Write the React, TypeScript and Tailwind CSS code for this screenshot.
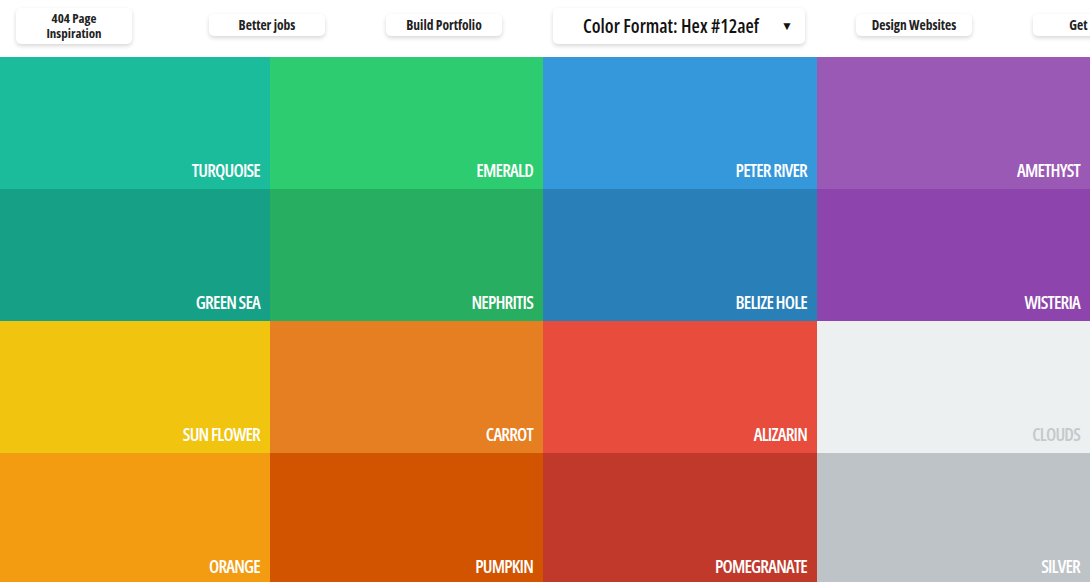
import React from 'react';

interface Swatch {
  name: string;
  bg: string;
  text: string;
}

const swatches: Swatch[] = [
  { name: 'TURQUOISE', bg: 'bg-[#1abc9c]', text: 'text-white' },
  { name: 'EMERALD', bg: 'bg-[#2ecc71]', text: 'text-white' },
  { name: 'PETER RIVER', bg: 'bg-[#3498db]', text: 'text-white' },
  { name: 'AMETHYST', bg: 'bg-[#9b59b6]', text: 'text-white' },
  { name: 'GREEN SEA', bg: 'bg-[#16a085]', text: 'text-white' },
  { name: 'NEPHRITIS', bg: 'bg-[#27ae60]', text: 'text-white' },
  { name: 'BELIZE HOLE', bg: 'bg-[#2980b9]', text: 'text-white' },
  { name: 'WISTERIA', bg: 'bg-[#8e44ad]', text: 'text-white' },
  { name: 'SUN FLOWER', bg: 'bg-[#f1c40f]', text: 'text-white' },
  { name: 'CARROT', bg: 'bg-[#e67e22]', text: 'text-white' },
  { name: 'ALIZARIN', bg: 'bg-[#e74c3c]', text: 'text-white' },
  { name: 'CLOUDS', bg: 'bg-[#ecf0f1]', text: 'text-[#c4c9cc]' },
  { name: 'ORANGE', bg: 'bg-[#f39c12]', text: 'text-white' },
  { name: 'PUMPKIN', bg: 'bg-[#d35400]', text: 'text-white' },
  { name: 'POMEGRANATE', bg: 'bg-[#c0392b]', text: 'text-white' },
  { name: 'SILVER', bg: 'bg-[#bdc3c7]', text: 'text-white' },
];

const btn =
  'shrink-0 w-[116px] rounded-[5px] bg-white shadow-[0_2px_4px_rgba(0,0,0,0.16)] text-[13.5px] font-bold text-[#222] text-center [font-stretch:75%] flex flex-col items-center justify-center';

export default function App() {
  return (
    <div className="w-[1090px] h-[582px] overflow-hidden bg-white font-['Open_Sans',sans-serif]">
      {/* top bar */}
      <header className="h-[57px] flex items-start pt-2 whitespace-nowrap">
        <div className={`${btn} ml-4 h-9 text-[13px] leading-[15px]`}>
          <span>404 Page</span>
          <span>Inspiration</span>
        </div>
        <div className={`${btn} ml-[77px] mt-[6px] h-[22px]`}>Better jobs</div>
        <div className={`${btn} ml-[61px] mt-[6px] h-[22px]`}>Build Portfolio</div>
        <div className="shrink-0 ml-[51px] w-[252px] h-9 rounded-[5px] bg-white shadow-[0_2px_4px_rgba(0,0,0,0.16)] flex items-center pl-[30px] pr-[12px] text-[19px] font-semibold text-[#111] [font-stretch:75%]">
          <span className="flex-1">Color Format: Hex #12aef</span>
          <span className="text-[12px]">▼</span>
        </div>
        <div className={`${btn} ml-[51px] mt-[6px] h-[22px]`}>Design Websites</div>
        <div className={`${btn} ml-[61px] mt-[6px] h-[22px]`}>Get Paid</div>
      </header>

      {/* color grid */}
      <main className="grid grid-cols-[270px_273px_274px_273px]">
        {swatches.map((s) => (
          <div key={s.name} className={`${s.bg} h-[132px] flex items-end justify-end px-[10px] pb-[5px]`}>
            <span className={`${s.text} text-[18px] font-semibold tracking-[-0.8px] [font-stretch:75%]`}>{s.name}</span>
          </div>
        ))}
      </main>
    </div>
  );
}
